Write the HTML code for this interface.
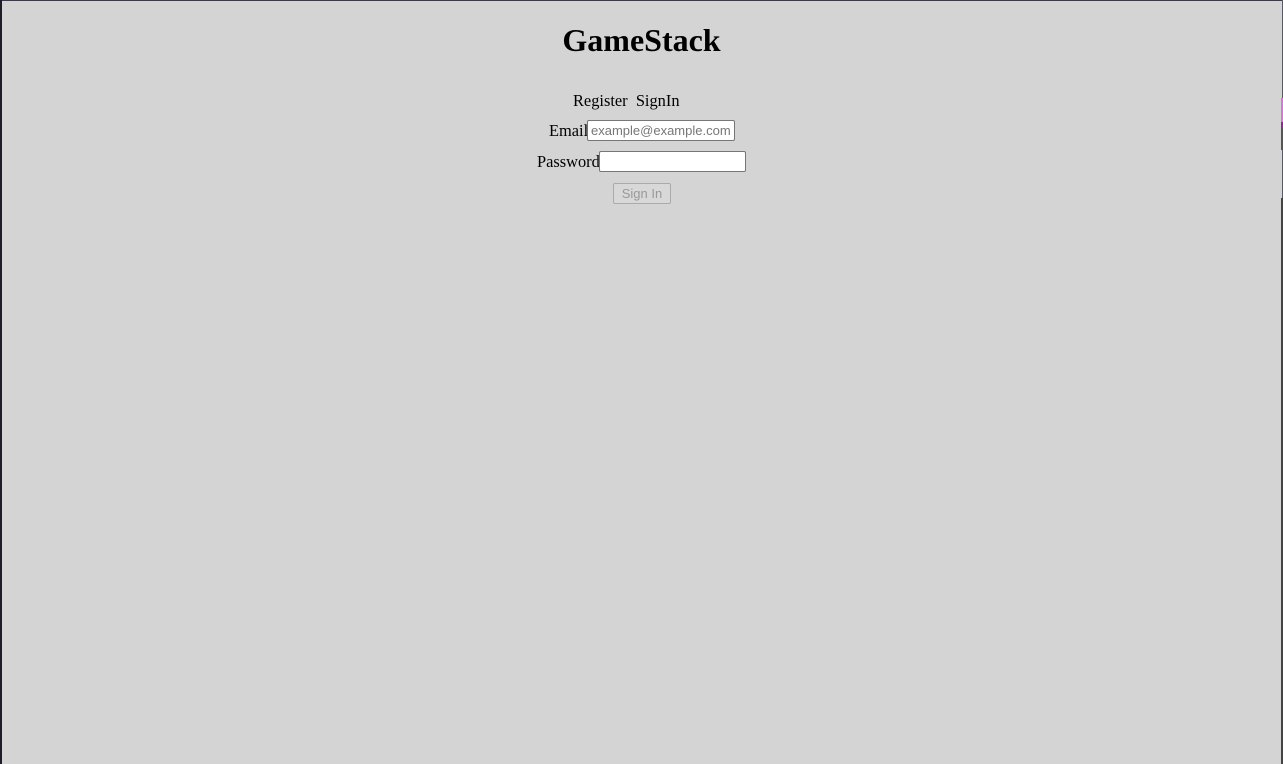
<!DOCTYPE html>
<html><head><style>
html,body{margin:0;padding:0;}
body{width:1283px;height:764px;background:#d4d4d4;position:relative;overflow:hidden;font-family:"Liberation Serif",serif;color:#000;}
.lb{position:absolute;left:0;top:0;width:2px;height:764px;background:#1e1e2a;}
.tb{position:absolute;left:0;top:0;width:1283px;height:1px;background:#3a3a48;}
.rb{position:absolute;right:0;top:0;width:1px;height:764px;background:#5a5a66;}
.a{position:absolute;white-space:nowrap;}
h1{margin:0;font-size:32px;font-weight:bold;position:absolute;left:0;width:1283px;text-align:center;top:22px;line-height:37px;}
input{position:absolute;box-sizing:border-box;border:1px solid #767676;border-radius:2px;background:#fff;height:21px;padding:1px 3px;font:13px "Liberation Sans",sans-serif;color:#777;}
.btn{position:absolute;left:613px;top:183px;width:58px;height:21px;box-sizing:border-box;border:1px solid #aaa;border-radius:2px;background:#d8d8d8;color:#999;font:13px "Liberation Sans",sans-serif;text-align:center;line-height:19px;}
</style></head><body>
<div class="tb"></div><div class="lb"></div><div class="rb"></div>
<div class="a" style="right:0;top:98px;width:2px;height:24px;background:#e070e0"></div>
<div class="a" style="right:0;top:122px;width:2px;height:6px;background:#a020a0"></div>
<div class="a" style="right:0;top:128px;width:2px;height:22px;background:#555"></div>
<div class="a" style="right:0;top:198px;width:2px;height:566px;background:#444"></div>
<h1>GameStack</h1>
<div class="a" style="left:573px;top:92px;font-size:16.4px;line-height:18px">Register&nbsp;&nbsp;SignIn</div>
<div class="a" style="left:549px;top:122px;font-size:16.4px;line-height:18px">Email</div>
<input style="left:587px;top:120px;width:148px" value="example@example.com">
<div class="a" style="left:537px;top:153px;font-size:16.4px;line-height:18px">Password</div>
<input style="left:599px;top:151px;width:147px" value="">
<div class="btn">Sign In</div>
</body></html>
